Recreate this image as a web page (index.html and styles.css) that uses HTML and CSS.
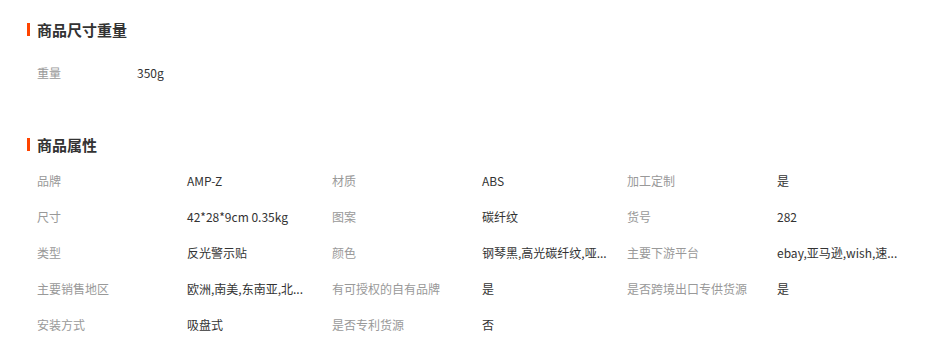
FILE: index.html
```html
<!DOCTYPE html>
<html lang="zh-CN">
<head>
<meta charset="utf-8">
<title>商品属性</title>
<link rel="stylesheet" href="styles.css">
</head>
<body>
<div class="page">
  <h2 class="section-title">商品尺寸重量</h2>
  <div class="size-list">
    <span class="label size-label">重量</span>
    <span class="value">350g</span>
  </div>

  <h2 class="section-title attr-title">商品属性</h2>
  <div class="attr-grid">
    <span class="label">品牌</span><span class="value">AMP-Z</span>
    <span class="label">材质</span><span class="value">ABS</span>
    <span class="label">加工定制</span><span class="value">是</span>

    <span class="label">尺寸</span><span class="value">42*28*9cm 0.35kg</span>
    <span class="label">图案</span><span class="value">碳纤纹</span>
    <span class="label">货号</span><span class="value">282</span>

    <span class="label">类型</span><span class="value">反光警示贴</span>
    <span class="label">颜色</span><span class="value">钢琴黑,高光碳纤纹,哑...</span>
    <span class="label">主要下游平台</span><span class="value">ebay,亚马逊,wish,速...</span>

    <span class="label">主要销售地区</span><span class="value">欧洲,南美,东南亚,北...</span>
    <span class="label">有可授权的自有品牌</span><span class="value">是</span>
    <span class="label">是否跨境出口专供货源</span><span class="value">是</span>

    <span class="label">安装方式</span><span class="value">吸盘式</span>
    <span class="label">是否专利货源</span><span class="value">否</span>
  </div>
</div>
</body>
</html>
```

FILE: styles.css
```css
html, body {
  margin: 0;
  padding: 0;
  background: #fff;
}
body {
  font-family: "Noto Sans CJK SC", "Noto Sans", sans-serif;
  font-size: 12px;
  color: #333;
}
.page {
  padding: 23px 0 0 27px;
}
.section-title {
  margin: 0;
  padding-left: 7px;
  border-left: 3px solid #ff4400;
  font-size: 15px;
  line-height: 13px;
  height: 13px;
  font-weight: bold;
  color: #333;
}
.size-list {
  margin-top: 19px;
  padding-left: 10px;
  display: flex;
  line-height: 36px;
}
.size-label {
  width: 100px;
}
.attr-title {
  margin-top: 47px;
}
.attr-grid {
  margin-top: 11px;
  padding-left: 10px;
  display: grid;
  grid-template-columns: 150px 145px 150px 145px 150px 145px;
  grid-auto-rows: 36px;
  align-items: center;
}
.label {
  color: #999;
  white-space: nowrap;
}
.value {
  color: #333;
  white-space: nowrap;
}
```
